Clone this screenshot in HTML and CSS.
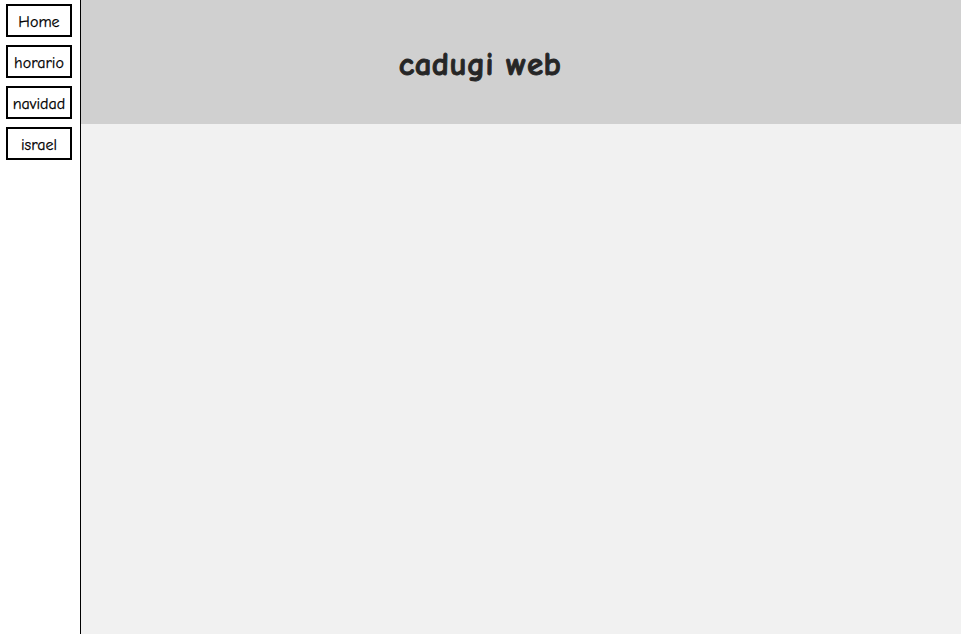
FILE: index.html
```html
<!DOCTYPE html>
<html lang="es">
<head>
<meta charset="utf-8">
<title>cadugi web</title>
<link rel="stylesheet" href="styles.css">
</head>
<body>
<div class="page">
  <nav class="sidebar">
    <a class="nav-btn" href="#">Home</a>
    <a class="nav-btn" href="#">horario</a>
    <a class="nav-btn" href="#">navidad</a>
    <a class="nav-btn" href="#">israel</a>
  </nav>
  <main class="main">
    <header class="header">
      <h1 class="title">cadugi web</h1>
    </header>
    <section class="content"></section>
  </main>
</div>
</body>
</html>
```
FILE: styles.css
```css
html, body {
  margin: 0;
  padding: 0;
  height: 100%;
}
body {
  font-family: "Comic Sans MS", "Comic Neue", "DejaVu Sans", sans-serif;
  background: #ffffff;
}
.page {
  display: flex;
  height: 634px;
}
.sidebar {
  display: flex;
  flex-direction: column;
  gap: 8px;
  padding: 4px 0 0 6px;
  box-sizing: border-box;
  width: 81px;
  border-right: 1px solid #000;
}
.nav-btn {
  display: flex;
  align-items: center;
  justify-content: center;
  width: 66px;
  height: 33px;
  box-sizing: border-box;
  border: 2px solid #000;
  background: #fff;
  color: #000;
  text-decoration: none;
  font-size: 16px;
  -webkit-text-stroke: 0.25px #000;
  padding-top: 2px;
}
.main {
  flex: 1;
  display: flex;
  flex-direction: column;
}
.header {
  height: 124px;
  background: #d0d0d0;
  display: flex;
  align-items: center;
  padding-right: 82px;
  padding-top: 4px;
  box-sizing: border-box;
}
.title {
  margin: 0;
  flex: 1;
  text-align: center;
  font-size: 33px;
  font-weight: bold;
  color: #262626;
  -webkit-text-stroke: 0.9px #262626;
  letter-spacing: 0.4px;
}
.content {
  flex: 1;
  background: #f1f1f1;
}
```
